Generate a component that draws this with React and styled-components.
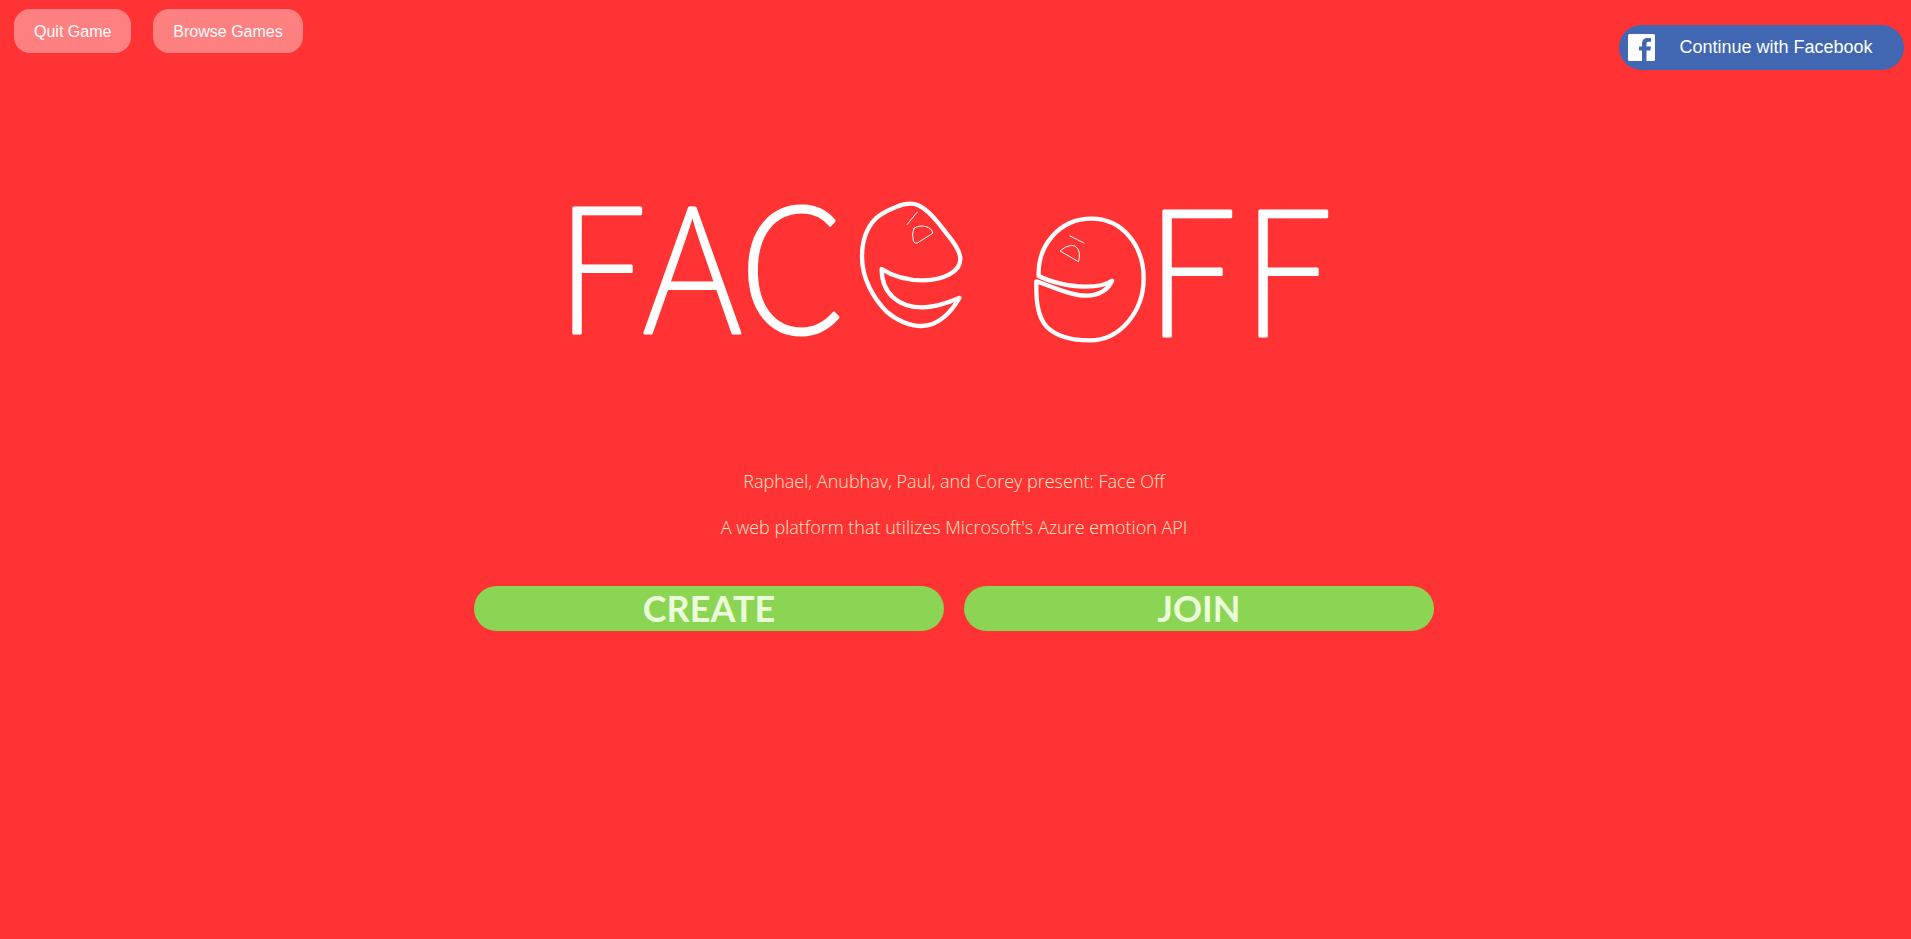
import React from 'react';
import styled, { createGlobalStyle } from 'styled-components';

const GlobalStyle = createGlobalStyle`
  *, *::before, *::after { box-sizing: border-box; }
  body {
    margin: 0;
    background: #ff3333;
    font-family: "Open Sans", "Noto Sans", sans-serif;
  }
`;

const Page = styled.div`
  min-height: 100vh;
  display: flex;
  flex-direction: column;
`;

const TopBar = styled.header`
  display: flex;
  justify-content: space-between;
  align-items: flex-start;
  padding: 9px 7px 0 14px;
`;

const GameActions = styled.nav`
  display: flex;
  gap: 22px;
`;

const SoftButton = styled.button`
  height: 44px;
  padding: 2px 20px 0;
  border: 0;
  border-radius: 16px;
  background: #ff8080;
  color: #ffffff;
  font: 16px "Liberation Sans", Arial, sans-serif;
  cursor: pointer;
`;

const FacebookButton = styled.button`
  display: flex;
  align-items: center;
  width: 285px;
  height: 45px;
  margin-top: 16px;
  padding: 0 7px 0 9px;
  border: 0;
  border-radius: 23px;
  background: #4267b2;
  color: #ffffff;
  font: 18px "Liberation Sans", Arial, sans-serif;
  cursor: pointer;
`;

const FacebookLabel = styled.span`
  flex: 1;
  text-align: center;
`;

const Main = styled.main`
  display: flex;
  flex-direction: column;
  align-items: center;
  width: 100%;
  max-width: 963px;
  margin: 0 auto;
  padding-right: 3px;
`;

const Logo = styled.svg`
  display: block;
  width: 100%;
  max-width: 800px;
  height: auto;
  margin-top: 120px;
  overflow: visible;
`;

const LogoLetters = styled.text`
  font: 100 172px "Noto Sans CJK SC", "Noto Sans", sans-serif;
  fill: #ffffff;
  stroke: #ffffff;
  stroke-width: 3px;
  stroke-linejoin: round;
`;

const Face = styled.g`
  fill: none;
  stroke: #ffffff;
  stroke-width: 13px;
  stroke-linecap: round;
  stroke-linejoin: round;
`;

const FineLine = styled.path`
  stroke-width: 3px;
`;

const Intro = styled.section`
  display: flex;
  flex-direction: column;
  gap: 22px;
  margin-top: 119px;
  color: #ffe8cc;
  text-align: center;
`;

const IntroLine = styled.p`
  margin: 0;
  font-size: 18px;
  font-weight: 300;
  line-height: 24px;
`;

const Choices = styled.div`
  display: flex;
  gap: 20px;
  width: 100%;
  margin-top: 47px;
`;

const ChoiceButton = styled.button`
  flex: 1;
  height: 45px;
  padding: 0;
  border: 0;
  border-radius: 23px;
  background: #8cd454;
  color: #eaffd9;
  font: 700 36px/45px Lato, "Open Sans", sans-serif;
  cursor: pointer;
`;

function FacebookMark() {
  return (
    <svg width="27" height="27" viewBox="0 0 27 27" aria-hidden="true">
      <rect width="27" height="27" rx="1.5" fill="#fff" />
      <path
        d="M14 27V16.500h-3V12.600h3V10c0-3.900 2-6 5.500-6H23v3.700h-2.300c-1.900 0-2.200.9-2.200 2.200v2.700H23l-.6 3.900h-3.900V27z"
        fill="#4267b2"
      />
    </svg>
  );
}

function FaceOffLogo() {
  return (
    <Logo viewBox="0 0 800 160" role="img" aria-label="Face Off">
      <LogoLetters x="1 89 185" y="143">FAC</LogoLetters>
      <Face transform="translate(286 -10) scale(0.33333)">
        <path d="M125 267C160 290 205 301 250 301C310 301 361 275 361 238C361 205 330 175 300 135C280 110 255 85 235 76C215 67 190 72 170 80C145 90 125 98 108 115C80 143 66 185 66 230C66 295 100 355 140 395C170 422 210 438 245 438C295 438 335 395 358 354C320 370 285 382 248 382C175 382 125 340 125 267Z" />
        <FineLine d="M222 145C240 130 278 140 278 160L232 189Q224 193 220 182Q214 160 222 145Z" />
        <FineLine d="M231 97L201 134" />
      </Face>
      <Face transform="translate(456 0) scale(0.33333)">
        <path d="M86 255C83 170 145 86 245 86C340 86 401 170 401 265C401 365 330 451 240 451C190 451 140 440 110 410C82 380 78 330 79 274C130 290 180 317 230 317C265 317 295 300 306 272C290 285 260 290 225 290C175 290 120 275 86 258Z" />
        <FineLine d="M151 182Q165 168 185 166Q205 168 208 190Q209 205 206 214Z" />
        <FineLine d="M180 138L222 159" />
      </Face>
      <LogoLetters x="591 687" y="146">FF</LogoLetters>
    </Logo>
  );
}

export default function App() {
  return (
    <Page>
      <GlobalStyle />
      <TopBar>
        <GameActions>
          <SoftButton type="button">Quit Game</SoftButton>
          <SoftButton type="button">Browse Games</SoftButton>
        </GameActions>
        <FacebookButton type="button">
          <FacebookMark />
          <FacebookLabel>Continue with Facebook</FacebookLabel>
        </FacebookButton>
      </TopBar>
      <Main>
        <FaceOffLogo />
        <Intro>
          <IntroLine>Raphael, Anubhav, Paul, and Corey present: Face Off</IntroLine>
          <IntroLine>A web platform that utilizes Microsoft's Azure emotion API</IntroLine>
        </Intro>
        <Choices>
          <ChoiceButton type="button">CREATE</ChoiceButton>
          <ChoiceButton type="button">JOIN</ChoiceButton>
        </Choices>
      </Main>
    </Page>
  );
}
